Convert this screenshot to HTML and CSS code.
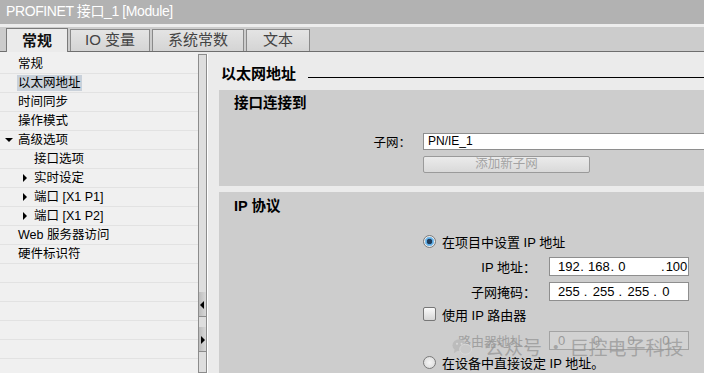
FILE: index.html
```html
<!DOCTYPE html>
<html lang="zh-CN">
<head>
  <meta charset="UTF-8">
  <title>PROFINET 接口_1 [Module]</title>
  <link rel="stylesheet" href="styles.css">
</head>
<body>
  <div class="panel">
    <div class="titlebar">PROFINET 接口_1 [Module]</div>
    <div class="tabbar">
      <div class="tab active">常规</div>
      <div class="tab">IO 变量</div>
      <div class="tab">系统常数</div>
      <div class="tab">文本</div>
    </div>

    <div class="main">
      <!-- 左侧导航树 -->
      <ul class="nav">
        <li class="row lv0"><span class="toggle"></span><span class="label">常规</span></li>
        <li class="row lv0"><span class="toggle"></span><span class="label selected">以太网地址</span></li>
        <li class="row lv0"><span class="toggle"></span><span class="label">时间同步</span></li>
        <li class="row lv0"><span class="toggle"></span><span class="label">操作模式</span></li>
        <li class="row lv0"><span class="toggle open"></span><span class="label">高级选项</span></li>
        <li class="row lv1"><span class="toggle"></span><span class="label">接口选项</span></li>
        <li class="row lv1"><span class="toggle closed"></span><span class="label">实时设定</span></li>
        <li class="row lv1"><span class="toggle closed"></span><span class="label">端口 [X1 P1]</span></li>
        <li class="row lv1"><span class="toggle closed"></span><span class="label">端口 [X1 P2]</span></li>
        <li class="row lv0"><span class="toggle"></span><span class="label">Web 服务器访问</span></li>
        <li class="row lv0"><span class="toggle"></span><span class="label">硬件标识符</span></li>
        <li class="row"></li>
        <li class="row"></li>
        <li class="row"></li>
        <li class="row"></li>
        <li class="row"></li>
        <li class="row"></li>
      </ul>

      <div class="splitter">
        <div class="grip"><span class="arrow-left"></span></div>
        <div class="grip"><span class="arrow-right"></span></div>
      </div>

      <div class="content">
        <div class="page-head">
          <h2>以太网地址</h2>
          <span class="rule"></span>
        </div>

        <section class="group first">
          <h3>接口连接到</h3>
          <div class="field subnet">
            <span class="field-label">子网：</span>
            <div class="input wide">PN/IE_1</div>
          </div>
          <div class="field btn-row">
            <span class="field-label"></span>
            <button class="btn" disabled>添加新子网</button>
          </div>
        </section>

        <section class="group second">
          <h3>IP 协议</h3>
          <div class="option opt-first">
            <span class="radio checked"></span>
            <span>在项目中设置 IP 地址</span>
          </div>
          <div class="field ip-row">
            <span class="field-label">IP 地址：</span>
            <div class="input ip">
              <span class="oct">192</span><span class="dot">.</span><span class="oct">168</span><span class="dot">.</span><span class="oct">0</span><span class="dot last">.</span><span class="oct">100</span>
            </div>
          </div>
          <div class="field ip-row">
            <span class="field-label">子网掩码：</span>
            <div class="input ip">
              <span class="oct">255</span><span class="dot">.</span><span class="oct">255</span><span class="dot">.</span><span class="oct">255</span><span class="dot">.</span><span class="oct">0</span>
            </div>
          </div>
          <div class="option opt-check">
            <span class="checkbox"></span>
            <span>使用 IP 路由器</span>
          </div>
          <div class="field ip-row router">
            <span class="field-label">路由器地址：</span>
            <div class="input ip disabled">
              <span class="oct">0</span><span class="dot">.</span><span class="oct">0</span><span class="dot">.</span><span class="oct">0</span><span class="dot">.</span><span class="oct">0</span>
            </div>
          </div>
          <div class="option opt-last">
            <span class="radio"></span>
            <span>在设备中直接设定 IP 地址。</span>
          </div>
        </section>

        <!-- 水印 -->
        <div class="watermark">
          <svg width="20" height="20" viewBox="0 0 22 20">
            <ellipse cx="8" cy="8" rx="7.5" ry="6.5" fill="#bcbcbc"/>
            <path d="M3 12 L2 17 L7 13.5 Z" fill="#bcbcbc"/>
            <ellipse cx="15" cy="12.5" rx="6.5" ry="5.5" fill="#c9c9c9" stroke="#d8d8d8" stroke-width="1"/>
            <circle cx="5.5" cy="6.5" r="1.1" fill="#dadada"/>
            <circle cx="10.5" cy="6.5" r="1.1" fill="#dadada"/>
          </svg>
          <span>公众号 · 巨控电子科技</span>
        </div>
      </div>
    </div>
  </div>
</body>
</html>
```

FILE: styles.css
```css
* {
  box-sizing: border-box;
}
body {
  margin: 0;
  font-family: "Liberation Sans", "Noto Sans CJK SC", sans-serif;
  font-size: 12px;
  color: #000;
  background: #ebebeb;
}
.panel {
  width: 704px;
  height: 373px;
  overflow: hidden;
  display: flex;
  flex-direction: column;
}
.titlebar {
  height: 27px;
  line-height: 23px;
  padding-left: 6px;
  background: #b2b2b2;
  color: #fff;
  font-size: 14px;
  letter-spacing: -0.4px;
  border-bottom: 3px solid #ededed;
}
.tabbar {
  height: 25px;
  background: #cccccc;
  border-bottom: 1px solid #6e6e6e;
  display: flex;
  align-items: flex-end;
  gap: 2px;
  padding-left: 6px;
}
.tab {
  height: 22px;
  line-height: 20px;
  font-size: 15px;
  color: #444;
  text-align: center;
  border: 1px solid #8a8a8a;
  border-bottom: none;
  background: linear-gradient(#e4e4e4, #d4d4d4);
}
.tab:nth-child(2) { width: 80px; }
.tab:nth-child(3) { width: 92px; }
.tab:nth-child(4) { width: 64px; }
.tab.active {
  width: 62px;
  height: 24px;
  margin-bottom: -1px;
  line-height: 23px;
  background: #ebebeb;
  border-color: #7a7a7a;
  font-weight: bold;
  color: #111;
}
.main {
  flex: 1;
  display: flex;
  min-height: 0;
}
.nav {
  list-style: none;
  margin: 0;
  padding: 3px 0 0 0;
  width: 198px;
  background: #f0f0f0;
  overflow: hidden;
}
.row {
  height: 19px;
  border-bottom: 1px solid #e2e2e2;
  display: flex;
  align-items: center;
  font-size: 12.5px;
  line-height: 16px;
}
.row.lv0 { padding-left: 3px; }
.row.lv1 { padding-left: 19px; }
.toggle {
  width: 16px;
  height: 18px;
  position: relative;
  flex: none;
}
.toggle.open::after {
  content: "";
  position: absolute;
  left: 2px;
  top: 7px;
  border-left: 4px solid transparent;
  border-right: 4px solid transparent;
  border-top: 4px solid #000;
}
.toggle.closed::after {
  content: "";
  position: absolute;
  left: 4px;
  top: 5px;
  border-top: 4px solid transparent;
  border-bottom: 4px solid transparent;
  border-left: 4px solid #000;
}
.label {
  padding: 0 1px;
  margin-left: -2px;
}
.label.selected {
  background: #c9d1da;
}
.splitter {
  width: 9px;
  margin-top: 2px;
  background: #dedede;
  border: 1px solid #8c8c8c;
  box-shadow: 1px 0 0 #fff;
  display: flex;
  flex-direction: column;
  gap: 10px;
  padding-top: 237px;
}
.grip {
  height: 25px;
  background: linear-gradient(to right, #bdbdbd, #d8d8d8);
  border-bottom: 1px solid #8c8c8c;
  position: relative;
}
.arrow-left {
  position: absolute;
  left: 1px;
  top: 9px;
  border-top: 4px solid transparent;
  border-bottom: 4px solid transparent;
  border-right: 4px solid #000;
}
.arrow-right {
  position: absolute;
  left: 2px;
  top: 9px;
  border-top: 4px solid transparent;
  border-bottom: 4px solid transparent;
  border-left: 4px solid #000;
}
.content {
  flex: 1;
  position: relative;
  padding-left: 11px;
  margin-left: 1px;
  overflow: hidden;
}
.page-head {
  display: flex;
  align-items: center;
  height: 38px;
  padding: 10px 0 4px 2px;
}
.page-head h2 {
  margin: 0;
  font-size: 15px;
  line-height: 20px;
  font-weight: bold;
}
.rule {
  flex: 1;
  height: 1px;
  background: #000;
  margin: 6px 0 0 12px;
}
.group {
  background: #cdcdcd;
  margin-right: -20px;
}
.group h3 {
  margin: 0;
  padding-left: 15px;
  font-size: 14.5px;
  line-height: 20px;
  font-weight: bold;
}
.group.first {
  height: 96px;
  padding-top: 3px;
}
.group.second {
  margin-top: 6px;
  height: 200px;
  padding-top: 4px;
}
.field {
  display: flex;
  align-items: center;
}
.field-label {
  width: 192px;
  margin-right: 12px;
  text-align: right;
  font-size: 12.5px;
  flex: none;
}
.subnet {
  margin-top: 20px;
  height: 17px;
}
.input {
  background: #fff;
  border: 1px solid #8e8e8e;
  height: 17px;
  line-height: 15px;
  padding-left: 4px;
  font-size: 12px;
}
.input.wide {
  flex: 1;
}
.btn-row {
  margin-top: 6px;
}
.btn {
  width: 167px;
  height: 17px;
  padding: 0;
  font-family: inherit;
  font-size: 12.5px;
  line-height: 15px;
  color: #a3a3a3;
  border: 1px solid #9a9a9a;
  border-radius: 2px;
  background: linear-gradient(#ebebeb, #d9d9d9);
}
.option {
  display: flex;
  align-items: center;
  height: 18px;
  padding-left: 204px;
  font-size: 13px;
  gap: 6px;
}
.opt-first { margin-top: 16px; }
.opt-check { margin-top: 4px; }
.opt-last { margin-top: 3px; }
.radio {
  width: 13px;
  height: 13px;
  border-radius: 50%;
  border: 1px solid #7a7a7a;
  background: radial-gradient(circle, #f6f6f6 0, #d6d6d6 100%);
  flex: none;
}
.radio.checked {
  background: radial-gradient(circle, #1f3c5a 0, #1f3c5a 2.5px, #5aa6de 3px, #8cc6ee 4.5px, #e9e9e9 5px);
}
.checkbox {
  width: 13px;
  height: 14px;
  border: 1px solid #777;
  border-radius: 2px;
  background: linear-gradient(#fafafa, #d6d6d6);
  flex: none;
}
.ip-row {
  margin-top: 7px;
  height: 19px;
}
.ip-row + .ip-row {
  margin-top: 6px;
}
.ip-row .field-label {
  width: 317px;
  margin-right: 13px;
  font-size: 13px;
}
.router {
  margin-top: 8px;
}
.router .field-label {
  color: #a0a0a0;
}
.input.ip {
  width: 140px;
  height: 19px;
  padding-left: 8px;
  font-size: 13px;
  line-height: 17px;
  display: flex;
  white-space: nowrap;
}
.oct {
  width: 26px;
}
.dot {
  width: 9px;
}
.dot.last {
  width: 29px;
  text-align: right;
  padding-right: 1px;
}
.input.ip.disabled {
  background: #d2d2d2;
  border-color: #a3a3a3;
  color: #9a9a9a;
}
.watermark {
  position: absolute;
  left: 244px;
  top: 282px;
  display: flex;
  align-items: center;
  gap: 13px;
  color: rgba(145, 145, 145, 0.7);
  font-size: 19px;
  line-height: 26px;
  font-family: "Noto Sans CJK SC", sans-serif;
}
```
